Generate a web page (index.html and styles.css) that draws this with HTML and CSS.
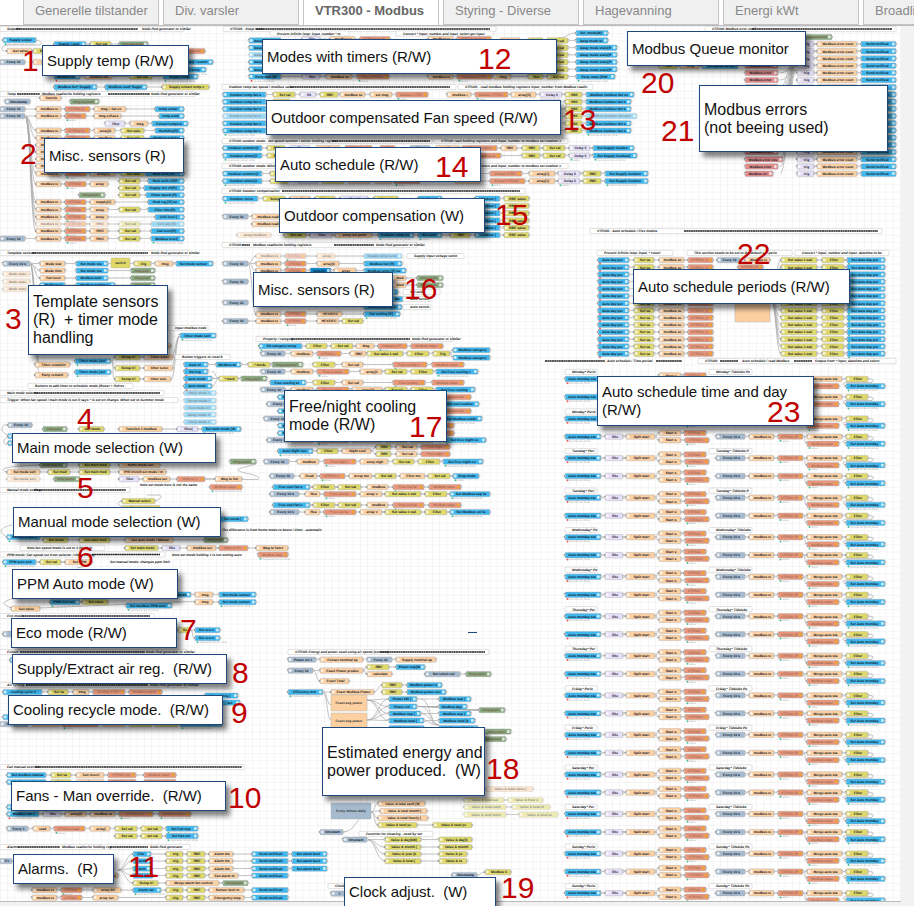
FILE: index.html
```html
<!DOCTYPE html>
<html lang="no">
<head>
<meta charset="utf-8">
<title>VTR300 - Modbus</title>
<link rel="stylesheet" href="styles.css">
</head>
<body>
<nav class="tabs" aria-label="Flows">
  <a class="tab" href="#generelle">Generelle tilstander</a>
  <a class="tab" href="#varsler">Div. varsler</a>
  <a class="tab active" href="#vtr300" aria-current="page">VTR300 - Modbus</a>
  <a class="tab" href="#styring">Styring - Diverse</a>
  <a class="tab" href="#hagevanning">Hagevanning</a>
  <a class="tab" href="#energi">Energi kWt</a>
  <a class="tab" href="#broadlink">Broadlink</a>
</nav>
<main class="workspace">
  <div class="canvas"><svg class="flow" id="flow" aria-hidden="true"></svg></div>
  <div class="notes">
    <p class="note n1">Supply temp (R/W)</p><span class="num c1">1</span>
    <p class="note n2">Misc. sensors (R)</p><span class="num c2">2</span>
    <p class="note large n3">Template sensors<br>(R)&nbsp; + timer mode<br>handling</p><span class="num c3">3</span>
    <p class="note n4">Main mode selection (W)</p><span class="num c4">4</span>
    <p class="note n5">Manual mode selection (W)</p><span class="num c5">5</span>
    <p class="note n6">PPM Auto mode (W)</p><span class="num c6">6</span>
    <p class="note n7">Eco mode (R/W)</p><span class="num c7">7</span>
    <p class="note n8">Supply/Extract air reg.&nbsp; (R/W)</p><span class="num c8">8</span>
    <p class="note n9">Cooling recycle mode.&nbsp; (R/W)</p><span class="num c9">9</span>
    <p class="note n10">Fans - Man override.&nbsp; (R/W)</p><span class="num c10">10</span>
    <p class="note n11">Alarms.&nbsp; (R)</p><span class="num c11">11</span>
    <p class="note n12">Modes with timers (R/W)</p><span class="num c12">12</span>
    <p class="note n13">Outdoor compensated Fan speed (R/W)</p><span class="num c13">13</span>
    <p class="note n14">Auto schedule (R/W)</p><span class="num c14">14</span>
    <p class="note n15">Outdoor compensation (W)</p><span class="num c15">15</span>
    <p class="note n16">Misc. sensors (R)</p><span class="num c16">16</span>
    <p class="note large n17">Free/night cooling<br>mode (R/W)</p><span class="num c17">17</span>
    <p class="note large n18">Estimated energy and<br>power produced.&nbsp; (W)</p><span class="num c18">18</span>
    <p class="note n19">Clock adjust.&nbsp; (W)</p><span class="num c19">19</span>
    <p class="note n20">Modbus Queue monitor</p><span class="num c20">20</span>
    <p class="note large n21">Modbus errors<br>(not beeing used)</p><span class="num c21">21</span>
    <p class="note n22">Auto schedule periods (R/W)</p><span class="num c22">22</span>
    <p class="note n23">Auto schedule time and day<br>(R/W)</p><span class="num c23">23</span>
  </div>
</main>
<script src="flow.js"></script>
</body>
</html>
```
FILE: styles.css
```css
* { box-sizing: border-box; }
body {
  margin: 0;
  height: 100vh;
  display: flex;
  flex-direction: column;
  overflow: hidden;
  background: #f2f2f2;
  font-family: "Liberation Sans", Arial, sans-serif;
}
.tabs {
  display: flex;
  gap: 4px;
  height: 26px;
  flex: none;
  padding-left: 23px;
  overflow: hidden;
  background: #fff;
  border-bottom: 1px solid #bbb;
}
.tab {
  flex: 0 0 136px;
  padding-left: 11px;
  border: solid #c4c4c4;
  border-width: 0 1px 1px;
  background: #f0f0f0;
  color: #888;
  font-size: 13px;
  line-height: 21px;
  white-space: nowrap;
  text-decoration: none;
}
.tab.active { background: #fff; color: #666; font-weight: bold; border-bottom: 0; }
.workspace {
  position: relative;
  flex: 1;
  display: flex;
  overflow: hidden;
  padding: 0 13px 4px 0;
}
.canvas { flex: 1; overflow: hidden; background: #fff; border-bottom: 1px solid #bbb; }
.flow {
  display: block;
  width: 100%;
  height: 100%;
  font-size: 4px;
  font-weight: bold;
  text-rendering: geometricPrecision;
}
.notes { position: absolute; inset: -26px 0 0; }
.note {
  position: absolute;
  display: flex;
  align-items: center;
  margin: 0;
  padding-left: 4px;
  border: 1px solid #1f497d;
  background: #fff;
  box-shadow: 4px 5px 5px rgba(0, 0, 0, .5);
  color: #111;
  font-size: 15px;
  line-height: 18px;
  white-space: nowrap;
}
.note.large { font-size: 16px; }
.num { position: absolute; color: #c00000; font-size: 30px; line-height: 30px; }

.n1 { left: 42px; top: 45px; width: 147px; height: 31px; }
.n2 { left: 44px; top: 138px; width: 140px; height: 35px; }
.n3 { left: 28px; top: 285px; width: 140px; height: 70px; }
.n4 { left: 12px; top: 433px; width: 204px; height: 30px; }
.n5 { left: 13px; top: 507px; width: 208px; height: 30px; }
.n6 { left: 12px; top: 569px; width: 166px; height: 30px; }
.n7 { left: 11px; top: 618px; width: 166px; height: 30px; }
.n8 { left: 12px; top: 654px; width: 215px; height: 30px; }
.n9 { left: 8px; top: 695px; width: 215px; height: 30px; }
.n10 { left: 11px; top: 781px; width: 215px; height: 30px; }
.n11 { left: 13px; top: 854px; width: 101px; height: 30px; }
.n12 { left: 262px; top: 39px; width: 295px; height: 35px; }
.n13 { left: 266px; top: 100px; width: 295px; height: 35px; }
.n14 { left: 275px; top: 147px; width: 206px; height: 35px; }
.n15 { left: 279px; top: 198px; width: 206px; height: 35px; }
.n16 { left: 253px; top: 272px; width: 140px; height: 35px; }
.n17 { left: 284px; top: 390px; width: 163px; height: 52px; }
.n18 { left: 322px; top: 727px; width: 163px; height: 69px; }
.n19 { left: 344px; top: 877px; width: 152px; height: 30px; }
.n20 { left: 627px; top: 31px; width: 179px; height: 35px; }
.n21 { left: 699px; top: 85px; width: 189px; height: 67px; }
.n22 { left: 633px; top: 269px; width: 217px; height: 35px; }
.n23 { left: 597px; top: 376px; width: 217px; height: 50px; }

.c1 { left: 22px; top: 46px; }
.c2 { left: 20px; top: 139px; }
.c3 { left: 5px; top: 304px; }
.c4 { left: 77px; top: 404px; }
.c5 { left: 77px; top: 473px; }
.c6 { left: 77px; top: 542px; }
.c7 { left: 180px; top: 615px; }
.c8 { left: 232px; top: 658px; }
.c9 { left: 231px; top: 698px; }
.c10 { left: 228px; top: 783px; }
.c11 { left: 128px; top: 852px; }
.c12 { left: 478px; top: 44px; }
.c13 { left: 563px; top: 105px; }
.c14 { left: 435px; top: 152px; }
.c15 { left: 495px; top: 200px; }
.c16 { left: 404px; top: 274px; }
.c17 { left: 409px; top: 412px; }
.c18 { left: 486px; top: 754px; }
.c19 { left: 501px; top: 873px; }
.c20 { left: 641px; top: 68px; }
.c21 { left: 661px; top: 116px; }
.c22 { left: 737px; top: 239px; }
.c23 { left: 767px; top: 397px; }
```
FILE: flow.js
```js
// Each line: y; kind x1 x2 label; ...  A kind in capitals is a disabled node.
// Suffix: "." active, "!" error, "+" long status text.  "/" leaves a gap in the wire.
const rows = `
29;c 0 184 Setpoint;l 16 138;n 142 Node-Red generator or similar
40;b+ 3 36 Supply setpoint
44;b 54 86 Supply / summer;y 90 111 Set value;g 119 148 msg.payload
51;o 7 32 Get value;y 33 50;/;r 180 205
62;t 0 25 Every 10 s;/;o 33 42;/;b 180 213 Supply / summer temp
69.5;b+ 175 206 Extract temp
76.5;b! 54 80;o 85 112 modbus write;y 130 152 Set value;b+ 163 198 Supply temp
87;b+ 54 97 Modbus Set* Supply temp;b+ 105 147 Modbus read* Supply temp;y 162 209 Supply extract temp calculate
94;c 0 195 Temp;l 17 40;n 42 Modbus read/write holding registers;l 108 150;n 151 Node-Red generator or similar
98;o 40 61 function
101.5;t 5 30 timestamp;/;g 70 99 msg.payload
109;t 0 25 Every 10 s;o 36 61 modbus read;r. 65 90 VTR300 (1);o 94 126 msg = fan extract;b 155 184 temp extract
116;t 0 25 Every 10 s;o 36 61 modbus read;r. 65 86 VTR300 (1);o 94 121 msg exhaust;b 159 184 temp outdoor
123.5;v 105 125 filter(0);o 130 148 msg;b 152 188 Extract temperature
130.5;o 36 61 modbus read;r. 65 90 VTR300 (1);o 94 115 array[0];y 121 144 Set value;b 155 184 Humidity[R]
138;o 36 61 modbus read;r 65 90;o 94 115;y 121 144;b 150 184
145;o 36 61 modbus read
152;o 36 61 modbus read
159;o 36 61 modbus read
166;o 36 61 modbus read
173.5;o 36 61 modbus read;r. 65 86 VTR300 (1);o 90 115 array[1];y 121 144 Set value;b 145 184 Heat exch [R]
181;y 119 140 Set value;b 148 184 Heat exch eff[R]
184;o 36 61 modbus read;r. 65 86 VTR300 (1);o 90 108 array[1]
188;y 119 140 Set value;b 144 184 Supply fan eff[R]
195;g 79 105 msg.payload;/;y 119 140 Set value;b 146 184 Rotor speed (R)
202;o 36 61 modbus read;r. 65 86 VTR300 (1);o 90 115 supply[3];b 148 184 Heat reg [R] out
209.5;o 36 61 modbus read;r. 65 86 VTR300 (1);o 90 108 array[1];y 119 140 Set value;b 148 184 Filter time(R) days
217;o 36 61 modbus read;r. 65 86 VTR300 (1);o 90 108 array[1];b 155 184 CO2 level [R]
224;O 36 61 modbus read;R. 65 86 VTR300 (1);O 90 108 RH/2;Y 119 140 Set value;B 151 184 CO2 adj [R]
231;o 36 61 modbus read;r. 65 86 VTR300 (1);o 90 108 RH/2;y 119 140 Set value;b 151 184 Fan level[R]
238.5;t 0 25 Every 10 s;o 36 61 modbus read;r. 65 86 VTR300 (1);o 90 108 RH/2;y 119 140 Set value;b+ 151 184 Modbus level[R]
253;c 0 190 Template sensors;l 32 148;n 151 Node-Red generator or similar
263.5;t 3 30 Every 10 s;o 40 65 Mode states;b 76 108 Set mode state;/;y 134 151 trig;o 155 173 msg;b 176 213 Set mode sensor
270.5;b 76 108 Set mode state;g 131 155 msg.payload
270.5;o 40 65 Mode timer
274;O 3 30 Mode state
278;o 40 65 Fan level;b 76 108;g 131 155 msg.payload
281.5;O 3 30 Mode state
285;b 40 65;b 76 115;g 131 155 msg.payload
289;O 3 30 Mode state
328;c 168 208 Input modbus nodes
335.5;b+ 180 216 Timer mode setting
346;y 115 140;o 144 171
357;c 175 230 Button triggers to reset boost mode (set)
361;b+ 75 111 Timer mode [setup]
357;y 115 140 Setup trig;o 144 173 Timer select
364.5;o 35 70 Timer remaining
372;b+ 75 111 Timer mode [setup]
368;y 115 140 Setup trig;o 144 173 timer select
375;o 35 68 Party remaining
379;y 115 140 Setup trig;o 144 171 timer select
386;c 28 133 Buttons to add timer to schedule mode (Boost + Refresh timer extra)
364.5;b! 184 208 Auto trigger;b 216 241 Modbus write;y 248 270 * mode;g 272 303 msg.payload
371.5;b! 184 208 Set trigger
378.5;b! 184 212 Auto mode trig;y 219 238 * mode;g 241 267 msg.payload
386;b! 184 212 Auto mode trig
393;B 184 216 Party mode trigger
400.5;B 184 216 Boost mode trigger
407.5;B 184 216 Eco mode trigger
414.5;B 184 216 Away mode trigger
422;B 184 216 Party mode trigger
393;c 0 164 Main mode selector;l 34 160
400;c 0 178 Trigger: When fan speed / main mode is set it says * is set on change. When set to Summer mode it is changed
425;t 8 32 Every 10 s
429;g 43 67 msg.payload;/;y 79 104 Get mode (1);/;o 119 162 function 1 modbus mode out;v 177 198 filter(0);b+ 202 241 Set main mode [W] out
436;b 8 12
443;b 8 12
465;g 40 67 msg.payload;/;y 79 110 Set main mode;/;o 119 160 Home mode out
461.5;g 230 256 msg.payload
472;o 7 40 Set mode setting;y 48 70 Set mode;y 79 110 Set main mode;o 119 166 PREVIOUS set mode / main set
479;O 7 40 Set mode setting;/;g 54 80 msg.payload;/;v 119 139 filter(0);o 143 170 modbus set;r 177 205 Write to VTR300;o 215 242 Msg to function
487;r+ 210 242 Modbus response
485;n 140 Note set mode here is not the same
490;c 0 130 Manual mode setting;l 34 126
501;y 122 155 Manual select
508;y 122 160
519;b 220 248 Set mode [W]
530;n 222 The difference is from home mode to boost / timer - automatic
537;b+ 7 40 Manual mode set
540;y 43 68 Set mode;y 79 110 Get auto mode [W];o 125 173 Get auto mode / Manual set;g 204 228 msg.payload
548;c 20 105 Note fan speed mode is set to 3 (high) in template
548;y 125 158 Set main mode;v 162 180 filter;o 187 216 modbus set;r 219 248 Write to VTR300;o 256 288 Msg to function
554.5;n 172 Note set mode holding 1 is not setting auto
554.5;c 0 165 PPM mode: Fan speed set from selector / timer setting;l 92 160;r+ 258 288 Modbus resp
562;b+ 3 36 PPM auto setting;y 40 61 Set val;o 65 92 Set PPM;/;n 110 Set manual mode: changes ppm limit
594.5;b 175 191;o 195 213 msg;b 219 256 Set mode sensor out
602;b+ 50 80 PPM CO2 select;y 82 108;/;o 195 213 msg;b+ 219 256 Set mode sensor out
605.5;b+ 126 172 Set modbus PPM auto value
608.5;o 11 40 Get value
616;c 0 154 Eco mode;l 22 150
630;y 178 190;b 195 220 Set eco out
638;b+ 195 220 Set eco out
634;b 7 12;t 3 12
652;c 0 187 Extract;l 20 145;n 146 Node-Red generator or similar
660;b 10 14
685;c 0 187 Air cycling;l 26 148;n 150 Node-Red generator or similar
692;b 3 42 Cooling cycle trig;y 48 68 Set val;o 73 89 msg;r 93 125 Cooling VTR300;r 129 162 Modbus response
695.5;b 205 238 Set cooling [W]
702.5;b 222 240 set
717;b 3 12
724;t 0 28;o 32 60;r. 62 98;o 103 125;y 129 152;y 155 178;b+ 180 222
767;c 0 244 Fan manual override;l 35 242
775;b 7 46 Set modbus manual type;y 51 71 Set val;o 76 104 Fan Override;r 108 136 VTR300 (w);r 144 176 Modbus response
782;b 7 46;y 51 71;o 76 104;r 108 136;r 144 176
807;b 7 12
814;b! 7 39 Modbus fan value;v 43 61 filter;o 65 86 array[0];o 90 115 modbus set;r. 119 153 VTR300 (w);r+ 159 191 Modbus response
828.5;t 7 28 Every 10 s;o 33 50 read;r. 54 85 VTR300 (read);o 90 110 array[0];y 115 137 Set val;y 141 162 set val;b+ 166 198 Set Fan sup [R]
836;y 115 137 Set val;y 141 162 set val;b+ 166 198 Set Fan ext [R]
847;c 0 190 Alarms;l 18 60;n 62 Modbus read/write holding reg;l 110 148;n 150 Node-Red generator
854;b 133 151 Filter;y 166 183 trig;y 187 205 RBE;o 209 233 Alarm msg;b 252 288 Send notification;b 292 327 Set alarm boolean(W)
861;b 133 151 Alarm;y 166 183 trig;y 187 205 RBE;o 209 233 Alarm msg;b 252 288 Send notification;b 292 327 Set alarm boolean(W)
868.5;b 133 151 Alarm;y 166 183 trig;y 187 205 RBE;o 209 233 Alarm msg;b 252 288 Send notification;b 292 327 Set alarm boolean(W)
875.5;o 100 118;/;b 133 153 Rotor;y 166 183 trig;y 187 205 RBE;o 209 238 Fan alarm msg;b 252 288 Send notification
883;y 133 158 Setup trig;o 166 219 Merge alarm fan control for setpoint alarms;g 223 248 msg.payload
890;o 32 57 modbus read;r. 61 82 VTR300;o 93 121 array bit read;b+ 133 161 Alarm val set;y 166 183 trig;y 187 205 RBE;o 209 244 Sensor fault msg;b 252 288 Send notification
897.5;o 32 57 modbus read;r 61 82 VTR300;o 93 118 array set;y 166 183 trig;y 187 205 RBE;o 209 244 Emergency stop msg;b 252 288 Send notification
861;t 0 12
29;c 223 496 VTR300 - Keep mode;l 256 490
33.5;c 270 349 Prevent infinite loop: input_number * mode set from timer;/;c 396 493 Convert * input_number and input_select get input from Modbus
76.5;b! 249 281 Party max [W];v 302 320 filter;o 326 352 modbus set;r. 357 389 Party VTR300 w;/;o 428 453 modbus read;r. 457 492 Fireplace VTR300;o 493 511 msg;y 528 543 Set;y 547 568 Set value;b+ 576 615 Party state [R/W]
87;c 222 456 Outdoor temp fan speed / modbus value;l 290 450;c 458 593 VTR300 - read modbus holding registers input_number from Modbus reading set to be
94.5;b 223 266 Outdoor temp fan setting[1];y 273 295 Set val;v 300 316 filter;y 320 338 RBE;o 340 365 modbus set;o 370 392 set msg;r. 396 428 Outdoor VTR300(w);/;o 447 471 modbus read;r. 475 508 Outdoor VTR300;o 511 536 array[5];v 540 562 Delay 5s;y 565 582 RBE;b 586 634 Modbus Outdoor fan setting[0]
141;c 222 432 VTR300 outdoor mode - fan speed summer / winter holding register;l 332 430;c 434 568 VTR300 read holding registers and input_number to modbus set outdoor values
148;b 223 262 Outdoor summer[2];y 267 285 RBE;v 290 310;o 316 340;r 345 372;r 380 395;/;t 410 430;o 436 460;r 462 497;o 501 517 RBE;y 522 540 RBE;y 543 565 Set val;v 569 590 Delay 5s;b 593 634 Set Supply Outdoor[2]
155.5;b+ 223 262 Outdoor winter[3];y 267 285 RBE;v 290 310;/;r. 462 501;y 522 540 RBE;y 543 565 Set val;v. 569 590 Delay 5s;b+ 593 637 Set Supply Outdoor[2]
166;c 222 432 VTR300 outdoor mode: Winter setup;l 280 430;c 434 568 VTR300 read holding registers and input_number to modbus set outdoor values
173.5;b 223 262 Outdoor summer[2];y 270 288;y 292 310;r 440 470;r 490 522 Extract VTR300;o 529 555 array[1];v 558 580 Delay 5s;y 583 601 RBE;b 605 648 Set Supply Outdoor(R)
181;b+ 223 262 Outdoor winter[3];y 270 288;v 298 318;y 322 344;o 348 370;o 375 392;r. 394 420;/;o 455 480;r. 490 525 Extract VTR300;o 529 555 array[1];v. 558 580 Delay 5s;y 583 601 RBE;b+ 605 648 Set Supply Outdoor(R)
191;c 222 525 VTR300 Outdoor compensation;l 282 520
198.5;b+ 223 258 Outdoor curve;y 263 285 Setup;o 290 310;y 315 335;v 340 368;y 374 398;b 418 442
216.5;t 223 248 Every 10 s;o 252 282 modbus read
224;o 252 282 modbus read
235;O 237 271 array modbus;/;y 284 306 Set val;v 310 332 filter;o 335 372 array set point;b+ 378 414 Outdoor comp out;b. 418 442 Set outdoor;y 450 470 RBE
245;c 222 417 VTR300;l 242 250;n 253 Modbus read/write holding registers;l 334 374;n 376 Node-Red generator or similar
256;O 256 281 modbus read;R. 285 306 VTR300;O 317 335 array;B 364 402 Supply temp sensor;/;c 407 464 Supply input voltage setting - CO2 / RH
263.5;t 223 248 Every 10 s;o 256 281 modbus read;r. 285 306 VTR300;o 317 339 array[0];b 364 402 Modbus fan [R]
270.5;o 256 281 modbus read;r 285 306 VTR300;d 310 331 setpoint;o 334 356 array;b 364 406 Modbus temp [R] out
278;o 392 406;g 417 443 msg.payload
285;o 392 406;g 417 443 msg.payload
281.5;t 223 248 Every 10 s
292;b 391 398;/;c 403 440 Set value
299;b 390 403;/;c 403 431 Auto sensing
302.5;t 223 248 Every 10 s
307;b 364 402;/;c 403 431 Auto sensing
314;o 256 281 modbus read;r 285 306 VTR300;o 317 342 HEX/DEC;b+ 364 400 Fan setting [R]
321;t 223 248 Every 10 s;o 256 281 modbus read;r. 285 306 VTR300;o 317 339 HEX/DEC;y 342 363 Set value
339;c 256 453 Property / category;l 291 410;n 412 Node-Red generator or similar
346;b+ 259 302 FN category setup trigger;y 306 327 Filter 1 **;y 331 353 Set val 1 **;o 356 374 Msg;r. 378 407 Category VTR300;r 411 443 Modbus response
353.5;t 261 285 Every 10 s;o 291 313 modbus read;r. 317 341 VTR300 (r);o 350 366 RBE;y 367 403 Set value 1 switch;y 407 429 Filter 1;y 433 450 Trig
350;b 453 490 Modbus category [W]
357.5;b 453 490 Modbus category [W]
364.5;y 313 335 Filter 1 **;o 342 363 Set val;r. 393 427 Free cooling VTR300;r 432 464 Modbus response
371.5;t 261 285 Every 10 s;o 291 313 modbus read;r. 317 349 Free cooling (r);o 360 382 array[3];y 385 407 Set val;y 411 433 Filter;b+ 436 478 Set Free cooling value[R]
382.5;b 270 306 Free cooling set;y 313 335 Filter 1 **;o 342 363 Set val;r. 393 425 Free cooling VTR300;r 432 464 Modbus response
389.5;t 261 285 Every 10 s;o 291 313 modbus read;r 317 349 Free cooling (r);o 352 382 array[3];y 385 407 Set val;y 411 433 Filter;b 436 475 Set Free cooling[R]
397;b 278 290;y 313 335;o 342 363;r 393 425;r 432 471 Modbus response
404;t 267 289;o 291 313;r 317 349;o 352 382;y 385 407;y 411 433;b 443 479 Set cool outdoor
411;b 278 290;y 313 335;r 432 471 Modbus response
418.5;t 264 289;y 411 433;b+ 443 482 Set Modbus outdoor
425.5;b 278 290;/;r 432 454
433;b 278 290;/;r 432 454
440;t 267 289;o 291 313;r. 317 349;o 352 382;y 385 407;y 411 433;b+ 445 486 Set Free night cool[R]
451;b+ 278 313 Auto night cooling[W];y 317 338 Filter 1 **;o 342 371 Night cool set
447;y 376 391 RBE;o 396 417 Set val;r 421 450 Free night VTR300
454;y 376 391 RBE;o 396 417 Set val;r 421 450 Free night VTR300
461.5;t 264 289 Every 10 s;o 297 319 modbus read;r. 324 356 Free night (r);o 360 388 array night[0];y 393 414 Set val;y 418 440 Filter;b+ 443 483 Set Free night cool(R)
476;t 270 294 Every 10 s;o 300 317 Read;r. 320 345 VTR300 (r);o 349 372 Array mode;y 375 396 Set Val;o 400 425 Filter mode;y 428 450 Set val;b. 453 479 Stop mode
487;b 273 310 Free cool fan sup;y 313 335 Filter 1 **;y 338 361 Set val 1;o 367 388 modbus set;r. 393 424 Free cool fan (w);r 429 461 Modbus response
494;t 270 299 Every 10 s;o 305 320 Read;r. 324 356 Free cool fan (r);o 360 382 array val;y 385 421 Set value 1 switch;y 425 447 Filter;b+ 450 490 Set Modbus sup fan[R]
505;b 273 310 Free cool fan ext;y 313 335 Filter 1 **;y 338 361 Set val 1;o 367 388 modbus set;r. 393 424 Free cool fan (w);r 429 461 Modbus response
512;t 270 299 Every 10 s;o 305 320 Read;r. 324 356 Free cool fan (r);o 360 382 array val;y 385 421 Set value 1 switch;y 425 447 Filter;b+ 450 490 Set Modbus ext fan[R]
652;c 288 489 VTR300 Energy and power used using air speed (sensors);l 380 485
659.5;t 288 316 Power on 1;o 320 363 Extract nominal speed nodes;/;t 367 392 Every 10 s;o 396 436 Supply nominal speed max
670.5;t 288 313 Every 10 s;o 320 363 Exact Power produced[W] out
667;y 367 389 RBE;b 396 425 Power sup[W]
674;o 367 392 calculate;/;t 425 460 Set return value;g 466 491 msg.payload
681;o 320 349 Exact Total [W]
692;b+ 288 323 Efficiency temp;o 331 374 Exact Modbus Power [kW];/
685;y 382 402 RBE;b 407 442 Modbus power out(R)
692;y 382 402 RBE;b 407 446 Modbus power out(R)
699;b 389 417 Power kW [R];b 439 471 Modbus sup [kW]
706.5;b 389 417 Power ext [R];b 439 467 Modbus day [kW]
710;g 479 505 msg.payload
713.5;b 389 421 Modbus sup [W];b 439 471 Modbus sup [kW]
720.5;b 389 424 Modbus total [kW];b 439 475 Modbus total [kW]
728;b 389 424;b 439 478
731.5;g 485 511 msg.payload
739;g 483 506 msg.payload
789;O 486 533 Value & total value [W out] (sum)
800;Y 464 504 Value & total each set[kW];Y 508 543 Value & hour of [W]
807;Y 464 506 Value & total each set[kW];Y 512 550 Value & total of [W]
814.5;Y 464 506 Value & total month[kW];Y 519 558 Value & total set(kW)
803.5;o 378 425 Value & total each [W out] (sum)
811;o 380 427 Value & total month [W out] (sum)
818;o 378 428 Value & total hourly [W out] (sum)
825;y 378 417 Value & total year(kW);y 433 472 Value & total year(kW)
832;t 320 343 timestamp
834;c 359 433 Function for cleaning - used by set time / kW reset
839.5;t 343 367 timestamp;/;y 385 421 Value & day(kW);y 439 472 Value & day[kW]
847;y 385 421 Value & month (kW);y 439 472 Value & month(kW)
854;y 385 421 Value & year (kW);y 439 467 Value & year(kW)
861;y 385 421 Value & total (kW);y 439 467 Value & total(kW)
872;y 485 511 Modbus time
875;t 452 477 timestamp
886;c 328 346 Clock
893.5;t 331 346 T
66;y 659 677 RBE;o 680 699 msg;b 702 738 Set queue sensor
29;c 705 896 VTR300 Modbus error notif;l 752 892
37;g 803 832 msg.payload
231;c 590 882 VTR300 - Auto schedule / Flex modes;l 684 878
253;c 597 673 Prevent infinite loop: input_* count set from timer;/;c 687 792 This section needs to be set to the default set period at start up or restart each day;/;c 795 889 Convert * input_number and input_datetime to be get and set from Modbus
361;l 545 605;n 607 Auto schedule / Time period;l 656 682;c 698 896 VTR300;l 720 738;n 742 Auto schedule / read Modbus;l 794 812;n 815 Output from * input_datetime and select
260;t 717 740 Every 10 s;o 745 770 Modbus read
267;r 738 763 VTR300 (R)
`;
const palette = { b: '#3fb7ef', o: '#fdd0a2', r: '#e9967a', y: '#e0d868', v: '#e6e0f8', g: '#87a980', t: '#a6bbcf', p: '#e08a8a', d: '#0a84cc' };
const names = { b: 'Modbus setting value[R] output', o: 'modbus read value set', r: 'VTR300 modbus (w) out', y: 'Set value ** 1 switch', v: 'filter(0) set', g: 'msg.payload', t: 'Every 10 s now', p: 'Modbus error counter value', d: 'setpoint' };
const f = n => Math.round(n * 10) / 10;
let wires = '', nodes = '';
const label = (x, y, s, style = '') => `<text x="${f(x)}" y="${f(y)}" ${style}>${s}</text>`;
const wire = (a, b, c, d) => {
  const k = Math.max(4, Math.abs(c - a) / 2);
  wires += `<path d="M${f(a)} ${f(b)}C${f(a + k)} ${f(b)} ${f(c - k)} ${f(d)} ${f(c)} ${f(d)}"/>`;
};
function node(kind, x1, x2, y, text) {
  const k = kind[0].toLowerCase(), off = kind[0] !== k, w = x2 - x1;
  if (k === 'l') { nodes += `<path d="M${x1} ${y}H${x2}" stroke="#222" stroke-width="1.3" stroke-dasharray="2 .3"/>`; return; }
  if (k === 'c') {
    nodes += `<rect x="${x1}" y="${y - 2.6}" width="${w}" height="5.2" rx="1" fill="#fff" stroke="#ccc" stroke-width=".6"/>`
      + label(x1 + 7, y + 1.3, text.slice(0, Math.max(3, (w - 8) / 1.8)), 'fill="#111" font-style="italic" font-size="3.4"');
    return;
  }
  const right = 'rgdp'.includes(k), back = right || (k === 'b' && x1 % 223 > 40 && w > 15);
  const body = (text || names[k]).slice(0, Math.max(0, Math.floor((w - 8) / 1.85)));
  const dim = 'rg'.includes(k) ? '#7b5f4c' : '#15202a';
  nodes += `<g${off ? ' opacity=".5"' : ''}><rect x="${x1}" y="${f(y - 2.6)}" width="${w}" height="5.4" rx="1" fill="${palette[k]}" stroke="#a9a9a9" stroke-width=".4"/>`
    + `<rect x="${back ? x2 - 4 : x1 + 1}" y="${f(y - 1.5)}" width="2.6" height="3" rx="1" fill="${k === 'r' ? '#eda516' : '#fff'}" opacity=".75"/>`
    + label(x1 + w / 2 + (back ? -1 : 1), y + 1.3, body, `text-anchor="middle" font-size="3.4" fill="${dim}" ${k === 'r' ? 'font-weight="normal"' : ''}`)
    + `<rect x="${x1 - 1}" y="${f(y - .9)}" width="1.8" height="1.8" fill="#ddd" stroke="#999" stroke-width=".3"/><rect x="${x2 - .8}" y="${f(y - .9)}" width="1.8" height="1.8" fill="#ddd" stroke="#999" stroke-width=".3"/></g>`;
  if (kind[1]) {
    const bad = kind[1] === '!';
    nodes += `<circle cx="${x1 + 2.5}" cy="${f(y + 4.3)}" r="1" fill="${bad ? '#e55' : '#4b9'}"/>`
      + label(x1 + 4.5, y + 5.2, kind[1] === '.' ? 'active' : bad ? 'input Oct 24, 20:36' : 'input set at: Oct 24, 20:36', 'fill="#aaa" font-size="2.4" font-weight="normal"');
  }
}
function draw(line) {
  const [ys, ...items] = line.split(';'), y = +ys;
  let last = null;
  for (const item of items) {
    if (item === '/') { last = null; continue; }
    const p = item.trim().split(' ');
    if (p[0] === 'n') { nodes += label(+p[1], y + 1.2, p.slice(2).join(' '), 'fill="#111" font-style="italic" font-size="3.4"'); last = null; continue; }
    const x1 = +p[1], x2 = +p[2];
    node(p[0], x1, x2, y, p.slice(3).join(' '));
    if (last !== null && !'cl'.includes(p[0][0])) wire(last, y, x1, y);
    last = 'cl'.includes(p[0][0]) ? null : x2;
  }
}
rows.trim().split('\n').forEach(draw);

// Timer modes
for (let i = 0; i < 5; i++) {
  const y = f(40.4 + i * 7.2);
  draw(`${y};${i === 2 ? 'B' : 'b'} 249 281 Away mode [W]`);
  draw(`${y};o 500 520;y 528 543 Set;y 547 568 Set value;b 576 ${i ? 617 : 608} Away mode state[R/W]`);
}
draw('39;v 302 320;o 330 355;r 360 390;/;o 428 453;r 457 491');
draw('33;b 576 608 Set_mode(W)');
wire(558, 38, 576, 33);
// Outdoor fan speed
for (let i = 1; i < 6; i++) {
  const y = f(94.5 + i * 7.2), k = i === 3 ? 'B' : 'b', s = i === 5 ? '+' : '';
  draw(`${y};${k}${s} 223 266 Outdoor temp fan setting[${i}];y 273 290`);
  draw(`${y};v 540 560;y 565 582 RBE;${k}${s} 586 ${i === 3 ? 637 : 631} Modbus Outdoor fan setting[${i}]`);
}
for (let i = 0; i < 6; i++) draw(`${f(198.5 + i * 7.3)};b 475 500 Outdoor [R];y 504 529 RBE value`);
// Error counters
for (let i = 0; i < 19; i++) {
  const y = f(44 + i * 7.2);
  draw(`${y};v 797 814 trig;o 817 857 Modbus error counter msg;b 861 896 Send notification out`);
  if (i > 2) draw(`${y};p 745 ${i > 15 ? 783 - (i - 16) * 5 : 778} Modbus error counter`);
  wire(780, y, 797, f(50 + (i % 6) * 4));
}
// Schedule periods
for (let i = 0; i < 14; i++) {
  const y = f(260 + i * 7.2);
  draw(`${y};b 598 629 Auto day period_set;y 634 654 Set val;o 659 684 modbus set;r 688 713 VTR300_1(w)`);
  draw(`${y};y 781 817 Set value 1 switch;y 822 844 Filter 1 **;b 847 885 Set Auto day period_set`);
  nodes += `<circle cx="600" cy="${f(y + 3.7)}" r="1" fill="#e55"/><circle cx="849" cy="${f(y + 3.7)}" r="1" fill="#4b9"/>`;
  wire(771, 300, 781, y);
}
nodes += '<rect x="735" y="290" width="35" height="32" rx="1" fill="#fdd0a2" stroke="#aaa" stroke-width=".4"/>';
// Weekly time and day groups
const days = ['Monday', 'Tuesday', 'Wednesday', 'Thursday', 'Friday', 'Saturday', 'Sunday'];
for (let k = 0; k < 14; k++) {
  const top = 371.9 + k * 39.55, day = days[k >> 1];
  draw(`${f(top)};c 565 597 ${day}* Periode ${k % 2 + 1};c 709 752 ${day}* Tidsluke Periode ${k % 2 + 1}`);
  for (const dy of [7, 25]) {
    const y = f(top + dy);
    draw(`${y};b! 565 601 Auto monday start_1 [W];v 605 623 filter;o 626 655 Split start time`);
    draw(`${f(y - 3.6)};o 659 681 Start set;r 684 706 VTR300 (w)`);
    draw(`${f(y + 3.6)};o 659 681 Start set;r. 685 709 VTR300 (w)`);
    draw(`${y};t 716 745 Every 10 s;o 749 774 modbus read;r. 778 803 VTR300 (R);o 807 842 Merge auto start time;y 846 868 Filter 1 **`);
    draw(`${f(y + 7.2)};r. 807 839 Modbus response;/;b+ 846 885 Set Auto monday start_[R]`);
    wire(655, y, 659, y - 3.6); wire(655, y, 659, y + 3.6); wire(803, y, 807, y + 7.2);
    wires += `<path d="M868 ${y}q8 0 4 3.6H846q-6 1 0 3.6"/>`;
  }
}
// Fan-out wires
for (const y of [130.5, 138, 173.5, 184, 202, 209.5, 217, 224, 231]) wire(25, 116, 36, y);
for (const y of [270.5, 278, 330, 345, 364.5, 375]) wire(30, 263.5, 40, y);
for (const y of [839.5, 847, 854, 861]) wire(367, 839.5, 385, y);
for (const y of [854, 861, 868.5, 875.5, 883]) wire(118, 870, 133, y);
for (const y of [699, 706.5, 713.5, 720.5]) { wire(367, 700, 389, y); wire(367, 720, 389, y); wire(421, y, 439, 725); wire(417, 706.5, 479, 710); }
for (const y of [803.5, 811, 818, 825]) wire(371, 812, 378, y);
for (const y of [256, 270.5, 314]) wire(248, 263.5, 256, y);
for (const y of [357, 368, 379]) { wire(171, y, 180, 335.5); wire(111, 361, 115, y); }
for (const y of [371.5, 378.5, 386]) wire(212, y, 219, 378.5);
wire(108, 263.5, 111, 263.5); wire(130, 263.5, 134, 263.5);
wire(363, 670.5, 367, 667); wire(363, 670.5, 367, 674); wire(313, 670.5, 320, 681);
wire(374, 692, 382, 685); wire(323, 692, 331, 705); wire(323, 692, 331, 720);
wire(450, 353.5, 453, 350); wire(450, 353.5, 453, 357.5); wire(343, 832, 371, 812);
wire(477, 875, 485, 872); wire(190, 630, 195, 638); wire(371, 451, 376, 447); wire(371, 451, 376, 454);
wires += '<path d="M36 40q8 2 4 5H8q-9 1-5 6h4M256 461.5c6 4-22 6-18 9s24 4 20 9h-16M8 425H4q-6 6 4 10M12 436q-14 4-5 9M40 465q-50 2-33 7M155 501q10-4 4-6h-12M7 537q-14-8 5-12M36 562h50q8 4-10 6M11 608q-14-5 0-9l50-2M205 479h10M40 608l160-7M122 501q-8 2 0 6"/>';
for (const [x, y, w, h, c, t] of [[111, 258, 19, 10, '#e0d868', 'switch'], [331, 695, 36, 16, '#fdd0a2', 'Exact avg power'], [331, 713, 36, 16, '#fdd0a2', 'Exact avg power'], [331, 803, 40, 16, '#a6bbcf', 'Every minute daily']])
  nodes += `<rect x="${x}" y="${y}" width="${w}" height="${h}" rx="1" fill="${c}" stroke="#a9a9a9" stroke-width=".4"/>` + label(x + w / 2, y + h / 2 + 1, t, 'text-anchor="middle" fill="#333" font-size="3.4"');
nodes += '<path d="M468 632.5h9" stroke="#1f497d"/>';

const svg = document.getElementById('flow');
svg.innerHTML = `<defs><pattern id="grid" width="7.2" height="7.2" patternUnits="userSpaceOnUse"><path d="M0 .5H7.2M.5 0V7.2" stroke="#f1f1f1" stroke-width=".8"/></pattern></defs>`
  + `<rect width="100%" height="100%" fill="url(#grid)"/><g transform="translate(0 -26)"><g fill="none" stroke="#aaa" stroke-width=".7">${wires}</g>${nodes}</g>`;
```
